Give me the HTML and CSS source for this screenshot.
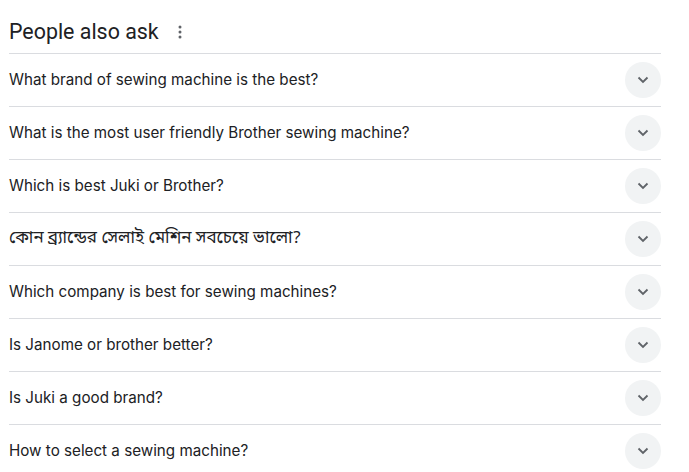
FILE: index.html
```html
<!DOCTYPE html>
<html>
<head>
<meta charset="utf-8">
<link rel="stylesheet" href="styles.css">
</head>
<body>
<div class="paa">
  <div class="head">
    <span class="title">People also ask</span>
    <span class="more"><svg width="4" height="14" viewBox="0 0 4 14"><circle cx="2" cy="2" r="1.5"/><circle cx="2" cy="7" r="1.5"/><circle cx="2" cy="12" r="1.5"/></svg></span>
  </div>
  <div class="row"><span class="q">What brand of sewing machine is the best?</span><span class="btn"><svg width="12" height="8" viewBox="0 0 12 8"><path d="M1.5 1.5 L6 6 L10.5 1.5" fill="none" stroke="#5f6368" stroke-width="1.8"/></svg></span></div>
  <div class="row"><span class="q">What is the most user friendly Brother sewing machine?</span><span class="btn"><svg width="12" height="8" viewBox="0 0 12 8"><path d="M1.5 1.5 L6 6 L10.5 1.5" fill="none" stroke="#5f6368" stroke-width="1.8"/></svg></span></div>
  <div class="row"><span class="q">Which is best Juki or Brother?</span><span class="btn"><svg width="12" height="8" viewBox="0 0 12 8"><path d="M1.5 1.5 L6 6 L10.5 1.5" fill="none" stroke="#5f6368" stroke-width="1.8"/></svg></span></div>
  <div class="row"><span class="q bn">কোন ব্র্যান্ডের সেলাই মেশিন সবচেয়ে ভালো?</span><span class="btn"><svg width="12" height="8" viewBox="0 0 12 8"><path d="M1.5 1.5 L6 6 L10.5 1.5" fill="none" stroke="#5f6368" stroke-width="1.8"/></svg></span></div>
  <div class="row"><span class="q">Which company is best for sewing machines?</span><span class="btn"><svg width="12" height="8" viewBox="0 0 12 8"><path d="M1.5 1.5 L6 6 L10.5 1.5" fill="none" stroke="#5f6368" stroke-width="1.8"/></svg></span></div>
  <div class="row"><span class="q">Is Janome or brother better?</span><span class="btn"><svg width="12" height="8" viewBox="0 0 12 8"><path d="M1.5 1.5 L6 6 L10.5 1.5" fill="none" stroke="#5f6368" stroke-width="1.8"/></svg></span></div>
  <div class="row"><span class="q">Is Juki a good brand?</span><span class="btn"><svg width="12" height="8" viewBox="0 0 12 8"><path d="M1.5 1.5 L6 6 L10.5 1.5" fill="none" stroke="#5f6368" stroke-width="1.8"/></svg></span></div>
  <div class="row"><span class="q">How to select a sewing machine?</span><span class="btn"><svg width="12" height="8" viewBox="0 0 12 8"><path d="M1.5 1.5 L6 6 L10.5 1.5" fill="none" stroke="#5f6368" stroke-width="1.8"/></svg></span></div>
</div>
</body>
</html>
```
FILE: styles.css
```css
html, body {
  margin: 0;
  padding: 0;
  background: #fff;
}
body {
  font-family: Roboto, "Liberation Sans", Arial, sans-serif;
  color: #202124;
}
.paa {
  width: 652px;
  margin-left: 9px;
}
.head {
  height: 54px;
  display: flex;
  align-items: center;
  gap: 19px;
  border-bottom: 1px solid #dadce0;
  box-sizing: border-box;
  padding-top: 9px;
}
.title {
  font-family: Roboto, sans-serif;
  font-size: 21.4px;
  color: #202124;
}
.more {
  display: flex;
  align-items: center;
  padding-top: 2px;
}
.more svg {
  fill: #5f6368;
}
.row {
  height: 53px;
  box-sizing: border-box;
  border-bottom: 1px solid #dadce0;
  display: flex;
  align-items: center;
  justify-content: space-between;
}
.q {
  font-family: Inter, "Liberation Sans", sans-serif;
  font-size: 15.2px;
  line-height: 24px;
  color: #202124;
  padding-bottom: 1px;
}
.bn {
  font-family: "Noto Sans Bengali", "Noto Sans", sans-serif;
  font-size: 17px;
}
.btn {
  width: 36px;
  height: 36px;
  border-radius: 50%;
  background: #f1f3f4;
  display: flex;
  align-items: center;
  justify-content: center;
}
```
